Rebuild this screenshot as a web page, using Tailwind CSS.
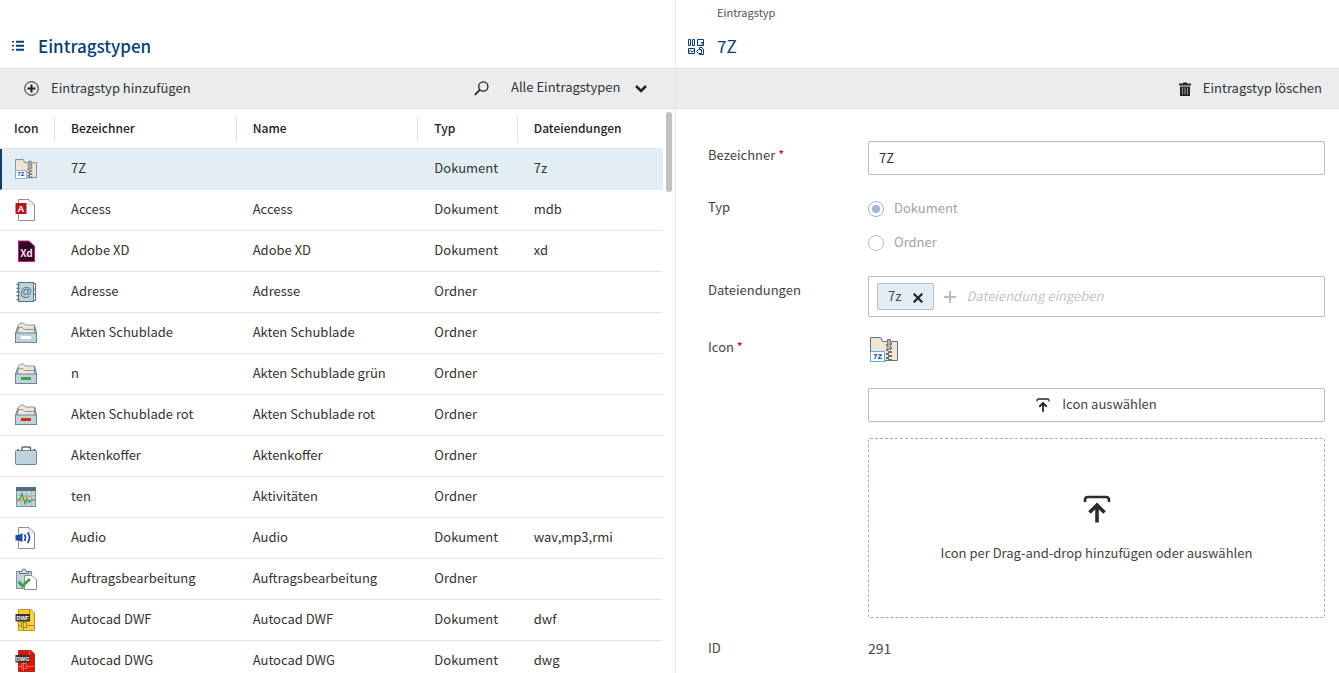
<!DOCTYPE html>
<html lang="de">
<head>
<meta charset="utf-8">
<meta name="viewport" content="width=device-width, initial-scale=1">
<title>Eintragstypen</title>
<script src="https://cdn.jsdelivr.net/npm/@tailwindcss/browser@4"></script>
</head>
<body class="font-['Noto_Sans_CJK_SC','Noto_Sans',sans-serif] text-[13px] leading-5 text-[#333] bg-white">

<!-- Shared icon shapes -->
<svg class="hidden" aria-hidden="true">
  <symbol id="archive" viewBox="0 0 28 25">
    <path d="M.5 .5H10.5L12.5 4.5H27.5V23.5H.5Z" fill="#f0e6d6" stroke="#5b7282"/>
    <path d="M16 7h2v2h-2zM16 12h2v2h-2zM18 14h4v2h-4zM16 16h3v2h-3zM18 18h4v2h-4zM16 20h3v2h-3zM18 22h4v2h-4zM20 6h2v2h-2zM20 10h2v2h-2z" fill="#707070"/>
    <rect x="17.500" y="2.500" width="3" height="10" fill="#b4b4b4" stroke="#808080"/>
    <rect x=".5" y="14.500" width="14" height="10" fill="#fff" stroke="#5badde"/>
    <text x="7.500" y="22" font-size="6.500" font-weight="700" font-family="DejaVu Sans" text-anchor="middle" fill="#1f4f9c">7Z</text>
  </symbol>
  <symbol id="drawer" viewBox="0 0 24 24">
    <path d="M3.500 12.500 4.500 4 6 2.500 7.500 2H9.500L11.500 4H20.500V12.500Z" fill="#f0e6d6" stroke="#8b979d"/>
    <path d="M4 8.500 5.500 6.500H8.500L10.500 8.500H20.500" fill="none" stroke="#8b979d"/>
    <path d="M4 5.500 1.500 12.500M20.500 4.500 22.500 12.500" stroke="#6d8695" stroke-width="1.300" fill="none"/>
    <rect x="1.500" y="12" width="21" height="9.500" fill="#bed3de" stroke="#6d8695"/>
    <path d="M7 15H17V18H7Z" fill="currentColor"/>
  </symbol>
  <symbol id="page" viewBox="0 0 24 24">
    <path d="M4.500 1.500H15L20.500 7V22.500H4.500Z" fill="#fff" stroke="#8d9093"/>
    <path d="M15 1.500V7H20.500" fill="none" stroke="#8d9093" stroke-width=".5"/>
  </symbol>
  <symbol id="upload" viewBox="0 0 28 28">
    <path d="M2 7V5Q2 2 5 2H23Q26 2 26 5V7" fill="none" stroke="currentColor" stroke-width="2.600"/>
    <path d="M14 27.500V10M6.500 17.500 14 10 21.500 17.500" fill="none" stroke="currentColor" stroke-width="3.600"/>
  </symbol>
</svg>

<div class="grid grid-cols-[676fr_663fr] h-screen overflow-hidden">

  <!-- List of entry types -->
  <section class="flex flex-col min-w-0 min-h-0 border-r border-[#e4e6e7]">
    <header class="h-17 shrink-0 flex items-end pb-3 pl-3 gap-3.5 text-[#073f72]">
      <svg class="size-3 mb-1 shrink-0" viewBox="0 0 12 12" fill="currentColor"><path d="M0 1h2v1.500H0zM0 5h2v1.500H0zM0 9h2v1.500H0zM4 .8h8.500v2H4zM4 4.800h8.500v2H4zM4 8.800h8.500v2H4z"/></svg>
      <h1 class="text-[17px] leading-5 font-medium">Eintragstypen</h1>
    </header>

    <div class="h-[41px] shrink-0 flex items-center bg-[#ebecee] border-y border-[#e3e4e6] px-6">
      <button class="flex items-center gap-3 pb-px" type="button">
        <svg class="size-[15px] mt-px" viewBox="0 0 15 15" fill="none" stroke="#222"><circle cx="7.500" cy="7.500" r="6.800"/><path d="M7.500 3.500v8M3.500 7.500h8" stroke-width="2"/></svg>
        Eintragstyp hinzufügen
      </button>
      <button class="ml-auto mr-5.5" type="button" aria-label="Suchen">
        <svg class="size-[15px]" viewBox="0 0 15 15" fill="none" stroke="#222"><circle cx="9.300" cy="5.500" r="4.600" stroke-width="1.300"/><path d="M5.800 8.800 .8 13.800" stroke-width="1.800"/></svg>
      </button>
      <div class="relative pb-1">
        <select class="block appearance-none bg-transparent w-[140px] leading-5 pr-6" aria-label="Filter"><option>Alle Eintragstypen</option></select>
        <svg class="absolute right-1 top-2 w-3 h-2 pointer-events-none" viewBox="0 0 12 8" fill="none" stroke="#222" stroke-width="2.500"><path d="M1 1 6 6 11 1"/></svg>
      </div>
    </div>

    <div class="flex-1 min-h-0 flex overflow-hidden">
      <div class="flex-1 min-w-0 overflow-hidden">
        <table class="w-full table-fixed border-separate border-spacing-0 text-left [&_td]:h-[41px] [&_td]:p-0 [&_td]:pl-4 [&_td]:pb-0.5 [&_td]:border-b [&_td]:border-[#e4e6e7] [&_td:first-child]:pl-3.5 [&_td:first-child]:pb-0 [&_td_svg]:block [&_th]:p-0">
          <colgroup><col class="w-[8.3%]"><col class="w-[27.4%]"><col class="w-[27.4%]"><col class="w-[15%]"><col></colgroup>
          <thead>
            <tr class="text-[12px] text-[#222] [&_th]:h-10 [&_th]:font-medium [&_th]:border-b [&_th]:border-[#e4e6e7] [&_span]:block [&_span]:h-[26px] [&_span]:leading-6 [&_span]:border-r [&_span]:border-[#e0e2e3] [&_span]:pl-4">
              <th scope="col"><span class="pl-3.5!">Icon</span></th><th scope="col"><span>Bezeichner</span></th><th scope="col"><span>Name</span></th><th scope="col"><span>Typ</span></th><th scope="col"><span class="border-r-0!">Dateiendungen</span></th>
            </tr>
          </thead>
          <tbody>
            <tr class="bg-[#e2edf4]">
              <td class="border-l-2 border-l-[#073f72]! pl-[13px]!"><svg class="w-[22px] h-5"><use href="#archive"/></svg></td>
              <td>7Z</td><td></td><td>Dokument</td><td>7z</td>
            </tr>
            <tr>
              <td><svg class="size-6" viewBox="0 0 24 24"><use href="#page"/><path d="M1.500 5H12.500V16H1.500Z" fill="#b5121b"/><text x="7" y="14" font-size="9.500" font-weight="700" font-family="Liberation Sans" text-anchor="middle" fill="#fff">A</text></svg></td>
              <td>Access</td><td>Access</td><td>Dokument</td><td>mdb</td>
            </tr>
            <tr>
              <td><svg class="size-6" viewBox="0 0 24 24"><path d="M4.500 2H15L20.500 7V22.500H4.500Z" fill="#2e0a22" stroke="#d4148f"/><text x="12.500" y="17.500" font-size="10" font-weight="700" font-family="Noto Sans CJK SC" text-anchor="middle" fill="#ffd9f2">Xd</text></svg></td>
              <td>Adobe XD</td><td>Adobe XD</td><td>Dokument</td><td>xd</td>
            </tr>
            <tr>
              <td><svg class="size-6" viewBox="0 0 24 24" stroke="#5b7282" fill="none"><path d="M19.500 3.500H21.500V20.500H19.500" fill="#fff"/><path d="M20 9H21.500M20 14.500H21.500"/><rect x="4.500" y="2.500" width="15" height="19" fill="#bed3de"/><path d="M2.500 4.500H5.500M2.500 8.200H5.500M2.500 12H5.500M2.500 15.800H5.500M2.500 19.500H5.500" stroke-width="1.500"/><text x="12.200" y="15.500" font-size="12" font-family="Liberation Sans" text-anchor="middle" fill="#5b7282" stroke="none">@</text></svg></td>
              <td>Adresse</td><td>Adresse</td><td>Ordner</td><td></td>
            </tr>
            <tr>
              <td><svg class="size-6 text-white"><use href="#drawer"/></svg></td>
              <td>Akten Schublade</td><td>Akten Schublade</td><td>Ordner</td><td></td>
            </tr>
            <tr>
              <td><svg class="size-6 text-[#3fa045]"><use href="#drawer"/></svg></td>
              <td>n</td><td>Akten Schublade grün</td><td>Ordner</td><td></td>
            </tr>
            <tr>
              <td><svg class="size-6 text-[#d03210]"><use href="#drawer"/></svg></td>
              <td>Akten Schublade rot</td><td>Akten Schublade rot</td><td>Ordner</td><td></td>
            </tr>
            <tr>
              <td><svg class="size-6" viewBox="0 0 24 24"><path d="M8 7V4Q8 3 9 3H15.500Q16.500 3 16.500 4V7" fill="none" stroke="#666" stroke-width="1.500"/><path d="M3 5H5V7H3zM19.500 5H21.500V7H19.500z" fill="#5b7282"/><rect x="1.500" y="6.500" width="21" height="14" rx="1" fill="#bed3de" stroke="#6d8695"/></svg></td>
              <td>Aktenkoffer</td><td>Aktenkoffer</td><td>Ordner</td><td></td>
            </tr>
            <tr>
              <td><svg class="size-6" viewBox="0 0 24 24" fill="none"><rect x="2.500" y="2.500" width="19" height="19" fill="#bed3de" stroke="#7d929e"/><path d="M7.500 6V21M12.500 6V21M17.500 6V21M3 10.500H21M3 15.500H21" stroke="#a5b9c5"/><path d="M2 2H22V6H2Z" fill="#526d7d"/><path d="M3 17Q6 15.500 8 14 10 11 13 11.500 16 12 21 10.500" stroke="#f0a24a" stroke-width="1.300"/><path d="M3 14.500H5.500L8 8.500 11 18.500 13 13.500 15 17.500 17.500 15H21" stroke="#3fa045" stroke-width="1.200"/></svg></td>
              <td>ten</td><td>Aktivitäten</td><td>Ordner</td><td></td>
            </tr>
            <tr>
              <td><svg class="size-6" viewBox="0 0 24 24"><use href="#page"/><path d="M1.500 9H4.500L8.500 7V16L4.500 14.500H1.500Z" fill="#1f4f9c"/><path d="M10.500 8.500Q12.500 11.500 10.500 15M13.500 6.500Q17.500 11.500 13.500 17" fill="none" stroke="#1f4f9c" stroke-width="1.700"/></svg></td>
              <td>Audio</td><td>Audio</td><td>Dokument</td><td>wav,mp3,rmi</td>
            </tr>
            <tr>
              <td><svg class="size-6" viewBox="0 0 24 24"><rect x="2.500" y="4.500" width="15" height="17" fill="#bed3de" stroke="#7d929e"/><path d="M5.500 6.500V4.500H8Q8 2 10 2T12 4.500H14.500V6.500Z" fill="#dce7ed" stroke="#5b7282"/><path d="M10.500 8.500H18L22.500 13V22.500H10.500Z" fill="#fff" stroke="#8d9093"/><path d="M4.500 14.500 8.500 19 16 12" fill="none" stroke="#3fa045" stroke-width="2.800"/></svg></td>
              <td>Auftragsbearbeitung</td><td>Auftragsbearbeitung</td><td>Ordner</td><td></td>
            </tr>
            <tr>
              <td><svg class="size-6" viewBox="0 0 24 24"><path d="M4.500 1.500H17L20.500 5V22.500H4.500Z" fill="#ffd034" stroke="#b99539"/><path d="M4.500 17.500H8M12 17.500H20M15.500 2V6M9.500 13V22M7.500 14.500H12.500V19.500H7.500Z" fill="none" stroke="#a8842d"/><path d="M1.500 6H16V13.500H1.500Z" fill="#333"/><text x="8.700" y="11.800" font-size="5.500" font-weight="700" font-family="Liberation Sans" text-anchor="middle" fill="#fff">DWF</text></svg></td>
              <td>Autocad DWF</td><td>Autocad DWF</td><td>Dokument</td><td>dwf</td>
            </tr>
            <tr>
              <td><svg class="size-6" viewBox="0 0 24 24"><path d="M4.500 1.500H17L20.500 5V22.500H4.500Z" fill="#dc1508" stroke="#a92a20"/><path d="M4.500 17.500H8M12 17.500H20M15.500 2V6M9.500 13V22M7.500 14.500H12.500V19.500H7.500Z" fill="none" stroke="#f0685e"/><path d="M1.500 6H16V13.500H1.500Z" fill="#333"/><text x="8.700" y="11.800" font-size="5.500" font-weight="700" font-family="Liberation Sans" text-anchor="middle" fill="#fff">DWG</text></svg></td>
              <td>Autocad DWG</td><td>Autocad DWG</td><td>Dokument</td><td>dwg</td>
            </tr>
          </tbody>
        </table>
      </div>
      <div class="w-3 shrink-0 pt-[3px] pl-[3px]"><div class="w-1.5 h-20 rounded-full bg-[#c1c1c1]"></div></div>
    </div>
  </section>

  <!-- Details of the selected entry type -->
  <section class="flex flex-col min-w-0 min-h-0">
    <header class="h-17 shrink-0 flex items-end pb-3 pl-3 gap-3 text-[#073f72]">
      <svg class="size-[17px] shrink-0" viewBox="0 0 17 17" fill="none" stroke="currentColor"><path d="M.5.500h2v6h-2zM4.500.500h2v6h-2zM9.500.500h6v6h-6zM13 3.500h2.500M13 5h2.500M.5 9.500h6v5h-6zM1 12.500 2.500 11.500 4 13 6 11.500M11.500 10V8.500H14L15.500 10.500V15.500H11.500V14.500M8.500 12.500 10.500 10.500H13.500V14.500H10.500Z"/></svg>
      <div class="flex flex-col gap-4">
        <p class="text-[11px] leading-4 text-[#555]">Eintragstyp</p>
        <h2 class="text-[17px] leading-5 font-normal">7Z</h2>
      </div>
    </header>

    <div class="h-[41px] shrink-0 flex items-center justify-end bg-[#ebecee] border-y border-[#e3e4e6] pr-[17px]">
      <button class="flex items-center gap-3 pb-px" type="button">
        <svg class="w-3 h-3.5 mt-px" viewBox="0 0 12 14"><path d="M0 1.500H4V.5H8V1.500H12V3.500H0ZM1 4.500H11V14H1Z" fill="#222"/><path d="M3.500 5.500V12.500M6 5.500V12.500M8.500 5.500V12.500" stroke="#aaa" stroke-width=".9"/></svg>
        Eintragstyp löschen
      </button>
    </div>

    <form class="flex-1 min-h-0 overflow-hidden grid grid-cols-[160px_1fr] content-start pt-8 pl-8 pr-3.5 text-[#444]">
      <label class="pt-1" for="bez">Bezeichner <span class="text-[#b5121b]">*</span></label>
      <input id="bez" type="text" value="7Z" class="h-[34px] w-full rounded-xs border border-[#bbb] px-2.5 pb-0.5 text-[#333]">

      <span class="pt-[22px]" id="typ">Typ</span>
      <div class="pt-[23px] flex flex-col gap-3.5 text-[#a3a3a3]" role="radiogroup" aria-labelledby="typ">
        <label class="flex items-center gap-2.5 leading-5"><input type="radio" name="typ" checked disabled class="appearance-none mt-0.5 size-4 rounded-full border border-[#9fb5d3] bg-white flex items-center justify-center before:size-2 before:rounded-full before:bg-[#9fb5d3]">Dokument</label>
        <label class="flex items-center gap-2.5 leading-5"><input type="radio" name="typ" disabled class="appearance-none mt-0.5 size-4 rounded-full border border-[#bbb] bg-white">Ordner</label>
      </div>

      <label class="pt-7" for="ext">Dateiendungen</label>
      <div class="mt-6 h-[41px] rounded-xs border border-[#bbb] flex items-center px-2">
        <span class="h-[27px] rounded-xs border border-[#bbb] bg-[#e2edf4] flex items-center gap-3 px-2.5 pb-0.5">7z
          <button type="button" aria-label="7z entfernen"><svg class="size-2.5 mt-1" viewBox="0 0 10 10" stroke="#222" stroke-width="2.200"><path d="M.7.700 9.300 9.300M9.300.700.700 9.300"/></svg></button></span>
        <svg class="size-3 mx-2.5 shrink-0" viewBox="0 0 12 12" stroke="#bbb" stroke-width="2"><path d="M6 0V12M0 6H12"/></svg>
        <input id="ext" type="text" placeholder="Dateiendung eingeben" class="flex-1 min-w-0 pb-0.5 italic placeholder:text-[#c4c4c4]">
      </div>

      <span class="pt-5">Icon <span class="text-[#b5121b]">*</span></span>
      <div class="pt-5 pl-0.5"><svg class="w-7 h-[25px] block"><use href="#archive"/></svg></div>

      <button type="button" class="col-start-2 mt-[26px] h-[34px] rounded-xs border border-[#bbb] flex items-center justify-center gap-3 pb-0.5">
        <svg class="size-3.5 mt-0.5 text-[#222]"><use href="#upload"/></svg>Icon auswählen</button>

      <button type="button" class="col-start-2 mt-4 h-[180px] rounded-xs border border-dashed border-[#aaa] flex flex-col items-center justify-center gap-5 pt-0.5">
        <svg class="size-7 text-[#2b2b2b]"><use href="#upload"/></svg>Icon per Drag-and-drop hinzufügen oder auswählen</button>

      <span class="pt-5">ID</span><span class="pt-5 text-sm">291</span>
    </form>
  </section>
</div>
</body>
</html>
